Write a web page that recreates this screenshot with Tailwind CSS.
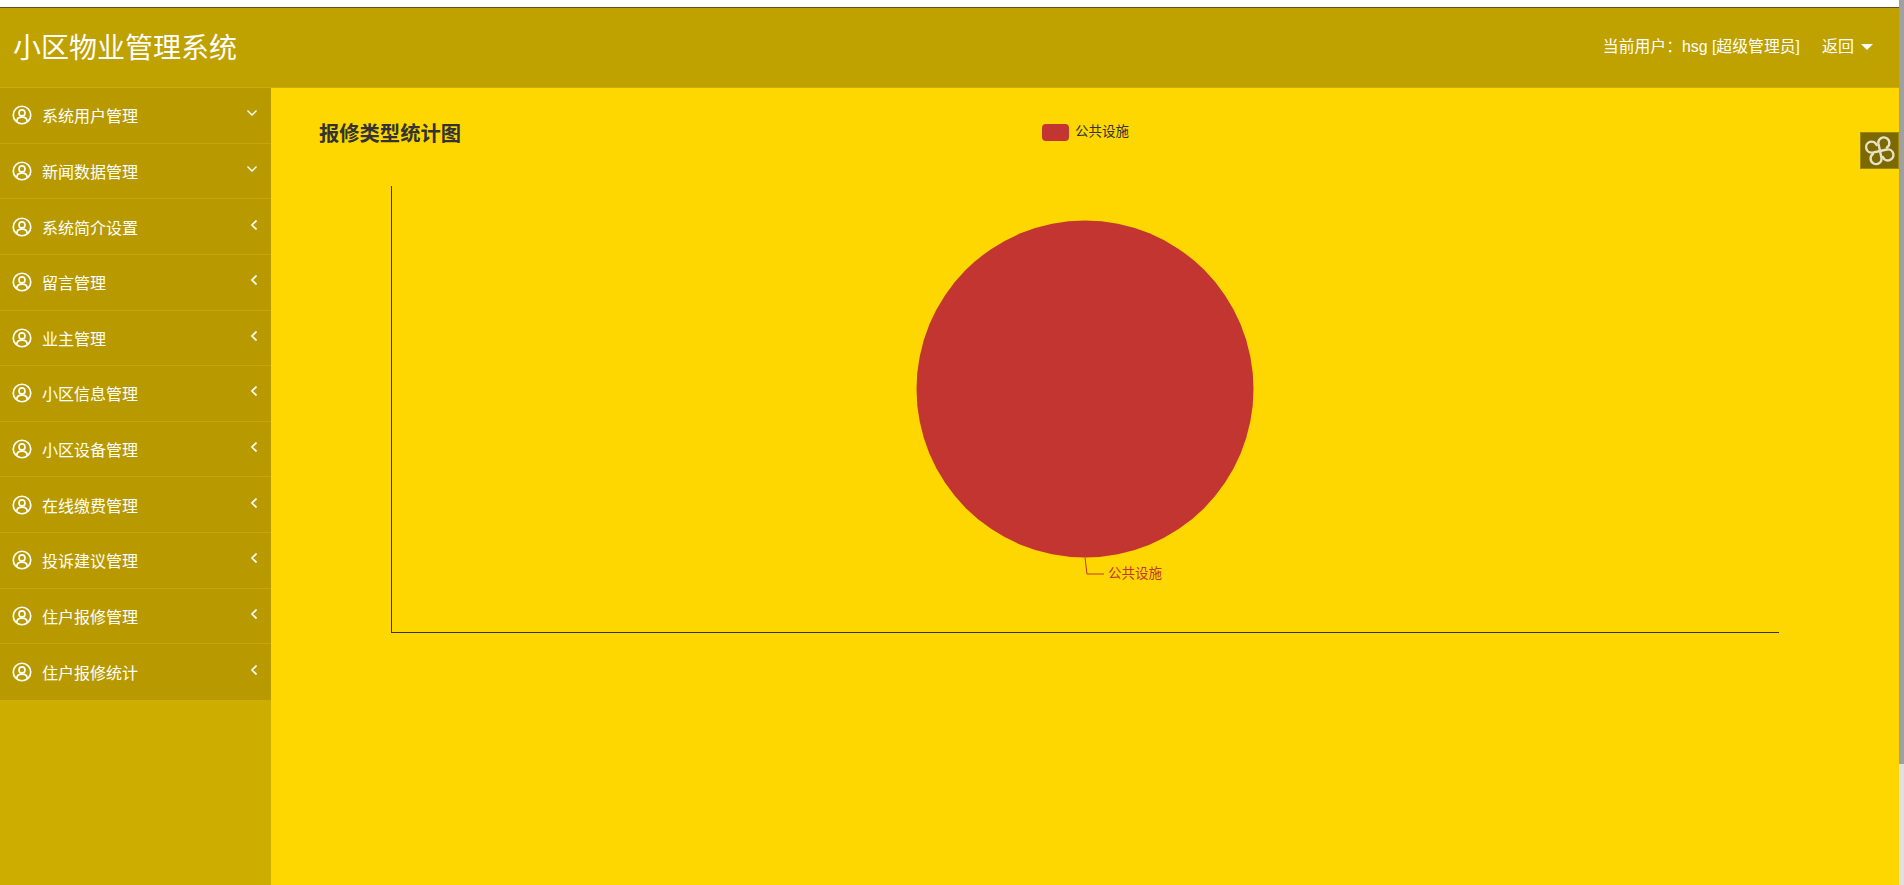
<!DOCTYPE html>
<html lang="zh-CN">
<head>
  <meta charset="UTF-8" />
  <title>小区物业管理系统</title>
  <script src="https://cdn.jsdelivr.net/npm/@tailwindcss/browser@4"></script>
</head>
<body class="bg-white overflow-hidden font-['Liberation_Sans','Noto_Sans_CJK_SC',sans-serif]">
<div class="flex h-[885px] w-[1904px]">
  <div class="w-[1899px] flex flex-col">
    <div class="h-[7px] bg-white"></div>

    <!-- Header -->
    <header class="h-[81px] shrink-0 bg-[#bfa100] border-t border-t-[#5f5120] border-b border-b-[#c9ab12] flex items-center justify-between text-white pl-[13px] pr-[26px]">
      <h1 class="text-[28px] leading-none mt-[2px]">小区物业管理系统</h1>
      <div class="flex items-center text-[15.85px] -mt-[1px]">
        <span>当前用户：hsg [超级管理员]</span>
        <span class="ml-[22px] text-[16px]">返回</span>
        <span class="ml-[7px] w-0 h-0 border-x-[6px] border-x-transparent border-t-[6px] border-t-white"></span>
      </div>
    </header>

    <div class="flex flex-1 min-h-0">
      <!-- Sidebar -->
      <aside class="w-[271px] shrink-0 bg-[#cdad00] text-white">
        <ul id="menu" class="bg-[#b89a00]">
          <li class="h-[55.64px] flex items-center pl-[12px] pr-[14px] border-b border-[#c4a50f]">
            <svg class="w-[20px] h-[20px] shrink-0" viewBox="0 0 24 24" fill="none" stroke="currentColor" stroke-width="2"><circle cx="12" cy="12" r="10.5"/><circle cx="12" cy="9.5" r="3.6"/><path d="M5.8 19.5c0-3.2 2.2-5 6.2-5s6.2 1.8 6.2 5"/></svg>
            <span class="ml-[10px] text-[16px] translate-y-[1.5px]">系统用户管理</span>
            <svg class="ml-auto w-[10px] h-[6px] -translate-y-[2px]" viewBox="0 0 10 6" fill="none" stroke="currentColor" stroke-width="1.4"><path d="M.5.5 5 5 9.500.5"/></svg>
          </li>
          <li class="h-[55.64px] flex items-center pl-[12px] pr-[14px] border-b border-[#c4a50f]">
            <svg class="w-[20px] h-[20px] shrink-0" viewBox="0 0 24 24" fill="none" stroke="currentColor" stroke-width="2"><circle cx="12" cy="12" r="10.5"/><circle cx="12" cy="9.5" r="3.6"/><path d="M5.8 19.5c0-3.2 2.2-5 6.2-5s6.2 1.8 6.2 5"/></svg>
            <span class="ml-[10px] text-[16px] translate-y-[1.5px]">新闻数据管理</span>
            <svg class="ml-auto w-[10px] h-[6px] -translate-y-[2px]" viewBox="0 0 10 6" fill="none" stroke="currentColor" stroke-width="1.4"><path d="M.5.5 5 5 9.500.5"/></svg>
          </li>
          <li class="h-[55.64px] flex items-center pl-[12px] pr-[14px] border-b border-[#c4a50f]">
            <svg class="w-[20px] h-[20px] shrink-0" viewBox="0 0 24 24" fill="none" stroke="currentColor" stroke-width="2"><circle cx="12" cy="12" r="10.5"/><circle cx="12" cy="9.5" r="3.6"/><path d="M5.8 19.5c0-3.2 2.2-5 6.2-5s6.2 1.8 6.2 5"/></svg>
            <span class="ml-[10px] text-[16px] translate-y-[1.5px]">系统简介设置</span>
            <svg class="ml-auto w-[6px] h-[10px] -translate-y-[2px]" viewBox="0 0 6 10" fill="none" stroke="currentColor" stroke-width="1.6"><path d="M5.500.5 1 5l4.500 4.500"/></svg>
          </li>
          <li class="h-[55.64px] flex items-center pl-[12px] pr-[14px] border-b border-[#c4a50f]">
            <svg class="w-[20px] h-[20px] shrink-0" viewBox="0 0 24 24" fill="none" stroke="currentColor" stroke-width="2"><circle cx="12" cy="12" r="10.5"/><circle cx="12" cy="9.5" r="3.6"/><path d="M5.8 19.5c0-3.2 2.2-5 6.2-5s6.2 1.8 6.2 5"/></svg>
            <span class="ml-[10px] text-[16px] translate-y-[1.5px]">留言管理</span>
            <svg class="ml-auto w-[6px] h-[10px] -translate-y-[2px]" viewBox="0 0 6 10" fill="none" stroke="currentColor" stroke-width="1.6"><path d="M5.500.5 1 5l4.500 4.500"/></svg>
          </li>
          <li class="h-[55.64px] flex items-center pl-[12px] pr-[14px] border-b border-[#c4a50f]">
            <svg class="w-[20px] h-[20px] shrink-0" viewBox="0 0 24 24" fill="none" stroke="currentColor" stroke-width="2"><circle cx="12" cy="12" r="10.5"/><circle cx="12" cy="9.5" r="3.6"/><path d="M5.8 19.5c0-3.2 2.2-5 6.2-5s6.2 1.8 6.2 5"/></svg>
            <span class="ml-[10px] text-[16px] translate-y-[1.5px]">业主管理</span>
            <svg class="ml-auto w-[6px] h-[10px] -translate-y-[2px]" viewBox="0 0 6 10" fill="none" stroke="currentColor" stroke-width="1.6"><path d="M5.500.5 1 5l4.500 4.500"/></svg>
          </li>
          <li class="h-[55.64px] flex items-center pl-[12px] pr-[14px] border-b border-[#c4a50f]">
            <svg class="w-[20px] h-[20px] shrink-0" viewBox="0 0 24 24" fill="none" stroke="currentColor" stroke-width="2"><circle cx="12" cy="12" r="10.5"/><circle cx="12" cy="9.5" r="3.6"/><path d="M5.8 19.5c0-3.2 2.2-5 6.2-5s6.2 1.8 6.2 5"/></svg>
            <span class="ml-[10px] text-[16px] translate-y-[1.5px]">小区信息管理</span>
            <svg class="ml-auto w-[6px] h-[10px] -translate-y-[2px]" viewBox="0 0 6 10" fill="none" stroke="currentColor" stroke-width="1.6"><path d="M5.500.5 1 5l4.500 4.500"/></svg>
          </li>
          <li class="h-[55.64px] flex items-center pl-[12px] pr-[14px] border-b border-[#c4a50f]">
            <svg class="w-[20px] h-[20px] shrink-0" viewBox="0 0 24 24" fill="none" stroke="currentColor" stroke-width="2"><circle cx="12" cy="12" r="10.5"/><circle cx="12" cy="9.5" r="3.6"/><path d="M5.8 19.5c0-3.2 2.2-5 6.2-5s6.2 1.8 6.2 5"/></svg>
            <span class="ml-[10px] text-[16px] translate-y-[1.5px]">小区设备管理</span>
            <svg class="ml-auto w-[6px] h-[10px] -translate-y-[2px]" viewBox="0 0 6 10" fill="none" stroke="currentColor" stroke-width="1.6"><path d="M5.500.5 1 5l4.500 4.500"/></svg>
          </li>
          <li class="h-[55.64px] flex items-center pl-[12px] pr-[14px] border-b border-[#c4a50f]">
            <svg class="w-[20px] h-[20px] shrink-0" viewBox="0 0 24 24" fill="none" stroke="currentColor" stroke-width="2"><circle cx="12" cy="12" r="10.5"/><circle cx="12" cy="9.5" r="3.6"/><path d="M5.8 19.5c0-3.2 2.2-5 6.2-5s6.2 1.8 6.2 5"/></svg>
            <span class="ml-[10px] text-[16px] translate-y-[1.5px]">在线缴费管理</span>
            <svg class="ml-auto w-[6px] h-[10px] -translate-y-[2px]" viewBox="0 0 6 10" fill="none" stroke="currentColor" stroke-width="1.6"><path d="M5.500.5 1 5l4.500 4.500"/></svg>
          </li>
          <li class="h-[55.64px] flex items-center pl-[12px] pr-[14px] border-b border-[#c4a50f]">
            <svg class="w-[20px] h-[20px] shrink-0" viewBox="0 0 24 24" fill="none" stroke="currentColor" stroke-width="2"><circle cx="12" cy="12" r="10.5"/><circle cx="12" cy="9.5" r="3.6"/><path d="M5.8 19.5c0-3.2 2.2-5 6.2-5s6.2 1.8 6.2 5"/></svg>
            <span class="ml-[10px] text-[16px] translate-y-[1.5px]">投诉建议管理</span>
            <svg class="ml-auto w-[6px] h-[10px] -translate-y-[2px]" viewBox="0 0 6 10" fill="none" stroke="currentColor" stroke-width="1.6"><path d="M5.500.5 1 5l4.500 4.500"/></svg>
          </li>
          <li class="h-[55.64px] flex items-center pl-[12px] pr-[14px] border-b border-[#c4a50f]">
            <svg class="w-[20px] h-[20px] shrink-0" viewBox="0 0 24 24" fill="none" stroke="currentColor" stroke-width="2"><circle cx="12" cy="12" r="10.5"/><circle cx="12" cy="9.5" r="3.6"/><path d="M5.8 19.5c0-3.2 2.2-5 6.2-5s6.2 1.8 6.2 5"/></svg>
            <span class="ml-[10px] text-[16px] translate-y-[1.5px]">住户报修管理</span>
            <svg class="ml-auto w-[6px] h-[10px] -translate-y-[2px]" viewBox="0 0 6 10" fill="none" stroke="currentColor" stroke-width="1.6"><path d="M5.500.5 1 5l4.500 4.500"/></svg>
          </li>
          <li class="h-[55.64px] flex items-center pl-[12px] pr-[14px]">
            <svg class="w-[20px] h-[20px] shrink-0" viewBox="0 0 24 24" fill="none" stroke="currentColor" stroke-width="2"><circle cx="12" cy="12" r="10.5"/><circle cx="12" cy="9.5" r="3.6"/><path d="M5.8 19.5c0-3.2 2.2-5 6.2-5s6.2 1.8 6.2 5"/></svg>
            <span class="ml-[10px] text-[16px] translate-y-[1.5px]">住户报修统计</span>
            <svg class="ml-auto w-[6px] h-[10px] -translate-y-[2px]" viewBox="0 0 6 10" fill="none" stroke="currentColor" stroke-width="1.6"><path d="M5.500.5 1 5l4.500 4.500"/></svg>
          </li>
        </ul>
      </aside>

      <!-- Main -->
      <main class="relative flex-1 bg-[#ffd700]">
        <div class="flex items-center h-[92px] pl-[48px]">
          <h2 class="w-[723px] text-[20.3px] font-bold text-[#333]">报修类型统计图</h2>
          <span class="w-[27px] h-[17px] rounded-[4px] bg-[#c23531] -mt-[4px]"></span>
          <span class="ml-[6px] text-[13.5px] text-[#333] -mt-[4px]">公共设施</span>
        </div>

        <!-- Pie chart -->
        <svg class="block" width="1628" height="500" viewBox="271 180 1628 500">
          <path d="M391.500 186V632H1779" fill="none" stroke="#333" stroke-width="1" shape-rendering="crispEdges"/>
          <circle cx="1085" cy="389" r="168.500" fill="#c23531"/>
          <path d="M1085 557.500 1087 574H1104" fill="none" stroke="#c23531" stroke-width="1"/>
          <text x="1108" y="578" font-size="13.500" fill="#c23531">公共设施</text>
        </svg>

        <!-- Floating tool button -->
        <div class="absolute right-0 top-[44px] w-[39px] h-[37px] bg-[#7c6900] border border-[#a08a10] flex items-center justify-center">
          <svg class="w-[32px] h-[32px] -rotate-12" viewBox="0 0 32 32" fill="none" stroke="#e8e2c8" stroke-width="2.400" stroke-linecap="round">
            <path d="M16 16H8.500a5.500 5.500 0 1 1 5.500-6.500"/>
            <path d="M16 16V8a5.500 5.500 0 1 1 7.500 6"/>
            <path d="M16 16v7.500a5.500 5.500 0 1 1-7.500-6"/>
            <path d="M16 16h7a5.500 5.500 0 1 1-5.500 6.500"/>
          </svg>
        </div>
      </main>
    </div>
  </div>

  <!-- Scrollbar -->
  <div class="w-[5px] bg-[#e0e0e0]">
    <div class="h-[764px] bg-[#a0a0a0]"></div>
  </div>
</div>
</body>
</html>
